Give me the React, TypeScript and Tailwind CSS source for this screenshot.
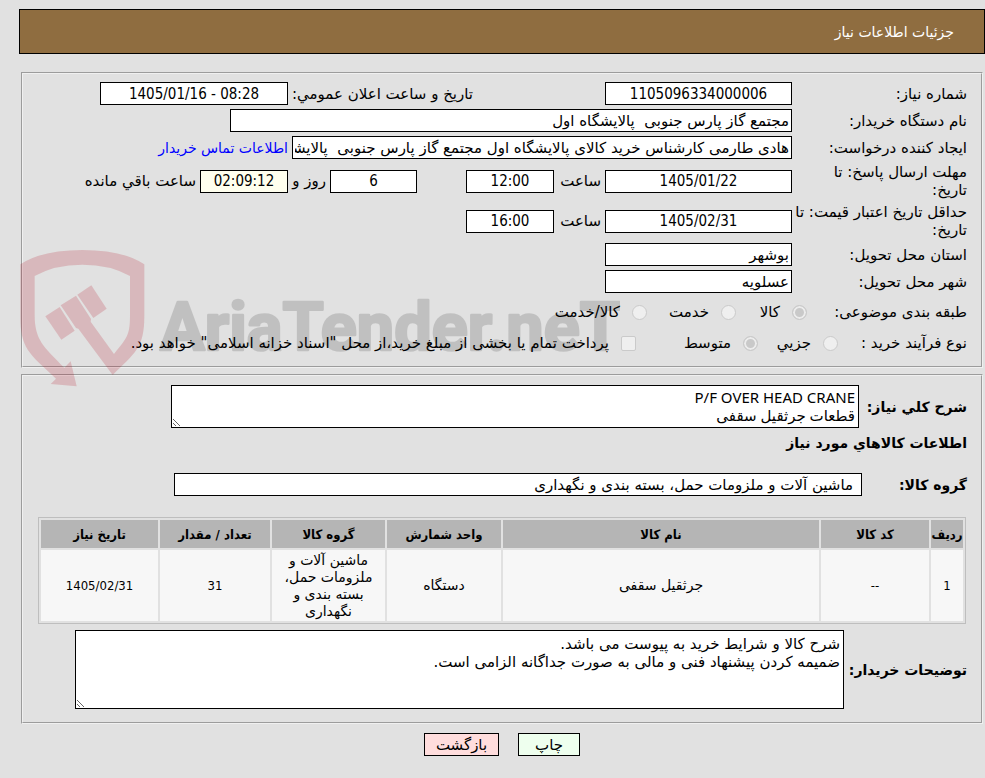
import type { ReactNode } from 'react';

const items = [
  {
    row: '1',
    code: '--',
    name: 'جرثقیل سقفی',
    unit: 'دستگاه',
    group: 'ماشین آلات و ملزومات حمل، بسته بندی و نگهداری',
    amount: '31',
    date: '1405/02/31',
  },
];

const columns = [
  { title: 'ردیف', width: 'w-[32px]' },
  { title: 'کد کالا', width: 'w-[108px]' },
  { title: 'نام کالا', width: '' },
  { title: 'واحد شمارش', width: 'w-[114px]' },
  { title: 'گروه کالا', width: 'w-[113px]' },
  { title: 'تعداد / مقدار', width: 'w-[110px]' },
  { title: 'تاریخ نیاز', width: 'w-[117px]' },
];

const box = 'h-[23px] shrink-0 border border-black px-0.5';
const textBox = `${box} bg-white`;
const numberBox = `${box} bg-white text-center font-['DejaVu_Sans_Condensed',sans-serif]`;
const timerBox = `${box} bg-[#ffffee] text-center font-['DejaVu_Sans_Condensed',sans-serif]`;
const numberCell = "font-['DejaVu_Sans_Condensed',sans-serif] text-[13px]";
const optionBox =
  'size-[15px] shrink-0 appearance-none border border-[#cacaca] bg-[#efefef]';
const radioBox = `${optionBox} rounded-full checked:bg-[#c9c9c9] checked:shadow-[inset_0_0_0_2px_#ececec]`;

function Row({ id, label, children }: { id: string; label: string; children: ReactNode }) {
  return (
    <div className="flex items-center">
      <label htmlFor={id} className="w-[175px] shrink-0 whitespace-pre">
        {label}
      </label>
      {children}
    </div>
  );
}

function Watermark() {
  return (
    <svg
      aria-hidden="true"
      viewBox="60 178 1800 420"
      className="pointer-events-none absolute top-[249px] left-5 h-[140px] w-[600px]"
    >
      <g fill="#b40014" fillOpacity="0.18">
        <path d="M61 224 Q125 181 247 181 Q370 181 433 224 V380 C433 475 405 490 338 556 L235 417 L228 415 L182 347 L228 318 L273 388 L272 396 L342 493 C385 440 390 435 390 370 V259 Q330 225 247 225 Q164 225 104 259 V375 C104 450 130 470 193 534 L212 515 L230 590 L152 583 L168 567 C85 490 61 475 61 380 Z" />
        <path d="M136 380 L179 352 L224 423 L184 450 Z" />
        <path d="M232 315 L274 287 L320 357 L280 385 Z" />
      </g>
      <text
        x="480"
        y="482"
        direction="ltr"
        fill="#000"
        stroke="#000"
        strokeWidth="8"
        strokeLinejoin="round"
        opacity="0.14"
        fontSize="200"
        fontWeight="700"
        fontFamily="Roboto, sans-serif"
      >
        AriaTender.neT
      </text>
    </svg>
  );
}

export default function App() {
  return (
    <div
      dir="rtl"
      className="relative min-h-screen bg-[#e1e1e1] pt-[9px] pb-[22px] font-['DejaVu_Sans',sans-serif] text-[15px] leading-[18px] text-black"
    >
      <header className="ml-[19px] flex h-[45px] items-center border border-black bg-[#8f6d40] pr-[30px] text-sm text-white">
        <h1>جزئیات اطلاعات نیاز</h1>
      </header>

      <main className="mt-[18px] mr-0.5 ml-[21px]">
        <fieldset className="flex flex-col gap-1 border-2 border-[#f0f0f0] px-3.5 pt-2 pb-[11px] [border-style:groove]">
          <Row id="number" label="شماره نیاز:">
            <input id="number" readOnly defaultValue="1105096334000006" className={`${numberBox} w-[187px]`} />
            <label htmlFor="announced" className="w-[317px] shrink-0 pl-1 text-left whitespace-nowrap">
              تاریخ و ساعت اعلان عمومي:
            </label>
            <input
              id="announced"
              dir="ltr"
              readOnly
              defaultValue="1405/01/16 - 08:28"
              className={`${numberBox} w-[188px]`}
            />
          </Row>
          <Row id="buyer" label="نام دستگاه خریدار:">
            <input
              id="buyer"
              readOnly
              defaultValue="مجتمع گاز پارس جنوبی  پالایشگاه اول"
              className={`${textBox} w-[562px]`}
            />
          </Row>
          <Row id="creator" label="ایجاد کننده درخواست:">
            <input
              id="creator"
              readOnly
              defaultValue="هادی طارمی کارشناس خرید کالای پالایشگاه اول مجتمع گاز پارس جنوبی  پالایشگاه اول"
              className={`${textBox} w-[500px]`}
            />
            <a href="#contact" className="mr-1 text-sm whitespace-nowrap text-[#0000ff]">
              اطلاعات تماس خریدار
            </a>
          </Row>
          <Row id="deadline" label={'مهلت ارسال پاسخ: تا\nتاریخ:'}>
            <input id="deadline" readOnly defaultValue="1405/01/22" className={`${numberBox} w-[187px]`} />
            <label htmlFor="deadline-hour" className="w-[51px] shrink-0 pr-1">
              ساعت
            </label>
            <input id="deadline-hour" readOnly defaultValue="12:00" className={`${numberBox} w-[88px]`} />
            <input id="days" readOnly defaultValue="6" className={`${numberBox} mr-[49px] w-[87px]`} />
            <label htmlFor="days" className="w-[42px] shrink-0 pr-1 whitespace-nowrap">
              روز و
            </label>
            <input id="remaining" readOnly defaultValue="02:09:12" className={`${timerBox} w-[88px]`} />
            <label htmlFor="remaining" className="mr-1 whitespace-nowrap">
              ساعت باقي مانده
            </label>
          </Row>
          <Row id="validity" label={'حداقل تاریخ اعتبار قیمت: تا\nتاریخ:'}>
            <input id="validity" readOnly defaultValue="1405/02/31" className={`${numberBox} w-[187px]`} />
            <label htmlFor="validity-hour" className="w-[51px] shrink-0 pr-1">
              ساعت
            </label>
            <input id="validity-hour" readOnly defaultValue="16:00" className={`${numberBox} w-[88px]`} />
          </Row>
          <Row id="province" label="استان محل تحویل:">
            <input id="province" readOnly defaultValue="بوشهر" className={`${textBox} w-[187px]`} />
          </Row>
          <Row id="city" label="شهر محل تحویل:">
            <input id="city" readOnly defaultValue="عسلویه" className={`${textBox} w-[187px]`} />
          </Row>

          <div role="radiogroup" aria-labelledby="category" className="flex h-[30px] items-center">
            <span id="category" className="w-40 shrink-0">
              طبقه بندی موضوعی:
            </span>
            <label className="flex w-[71px] items-center gap-3">
              <input type="radio" name="category" disabled defaultChecked className={radioBox} />
              کالا
            </label>
            <label className="flex w-[89px] items-center gap-3">
              <input type="radio" name="category" disabled className={radioBox} />
              خدمت
            </label>
            <label className="flex items-center gap-3">
              <input type="radio" name="category" disabled className={radioBox} />
              کالا/خدمت
            </label>
          </div>

          <div role="radiogroup" aria-labelledby="process" className="flex h-6 items-center">
            <span id="process" className="w-[129px] shrink-0">
              نوع فرآیند خرید :
            </span>
            <label className="flex w-20 items-center gap-3">
              <input type="radio" name="process" disabled className={radioBox} />
              جزیي
            </label>
            <label className="flex w-[122px] items-center gap-3">
              <input type="radio" name="process" disabled defaultChecked className={radioBox} />
              متوسط
            </label>
            <label className="flex items-center gap-3 whitespace-nowrap">
              <input type="checkbox" disabled className={`${optionBox} rounded-xs`} />
              پرداخت تمام یا بخشی از مبلغ خرید،از محل "اسناد خزانه اسلامی" خواهد بود.
            </label>
          </div>
        </fieldset>

        <fieldset className="mt-1.5 border-2 border-[#f0f0f0] px-3.5 pt-[9px] pb-[13px] [border-style:groove]">
          <div className="flex items-center">
            <label htmlFor="summary" className="w-[108px] shrink-0 text-sm font-bold whitespace-nowrap">
              شرح کلي نیاز:
            </label>
            <textarea
              id="summary"
              readOnly
              defaultValue={'P/F OVER HEAD CRANE\nقطعات جرثقیل سقفی'}
              className="h-[43px] w-[688px] border border-black bg-white px-[3px] py-0.5 font-['Noto_Sans','DejaVu_Sans',sans-serif]"
            />
          </div>
          <h2 className="mt-1.5 text-sm leading-[18px] font-bold">اطلاعات کالاهاي مورد نیاز</h2>
          <div className="mt-[21px] flex items-center">
            <label htmlFor="group" className="w-[105px] shrink-0 text-sm font-bold">
              گروه کالا:
            </label>
            <input
              id="group"
              readOnly
              defaultValue="ماشین آلات و ملزومات حمل، بسته بندی و نگهداری"
              className="h-[23px] w-[688px] border border-black bg-white px-2"
            />
          </div>

          <table className="mx-px mt-[21px] w-[calc(100%-2px)] table-fixed border-separate border-spacing-0.5 border border-[#bebebe] text-center text-sm leading-[17px]">
            <thead className="font-['DejaVu_Sans_Condensed',sans-serif] text-[13px]">
              <tr className="h-7 bg-[#b5b5b5]">
                {columns.map((column) => (
                  <th key={column.title} scope="col" className={`${column.width} whitespace-nowrap`}>
                    {column.title}
                  </th>
                ))}
              </tr>
            </thead>
            <tbody>
              {items.map((item) => (
                <tr key={item.row} className="h-[71px] bg-[#f7f7f7]">
                  <td className={numberCell}>{item.row}</td>
                  <td className={numberCell}>{item.code}</td>
                  <td>{item.name}</td>
                  <td>{item.unit}</td>
                  <td className="px-3">{item.group}</td>
                  <td className={numberCell}>{item.amount}</td>
                  <td className={numberCell}>{item.date}</td>
                </tr>
              ))}
            </tbody>
          </table>

          <div className="mt-1.5 flex items-center">
            <label htmlFor="notes" className="w-[123px] shrink-0 text-sm font-bold whitespace-nowrap">
              توضیحات خریدار:
            </label>
            <textarea
              id="notes"
              readOnly
              defaultValue={'شرح کالا و شرایط خرید به پیوست می باشد.\nضمیمه کردن پیشنهاد فنی و مالی به صورت جداگانه الزامی است.'}
              className="h-[79px] w-[769px] border border-black bg-white px-[3px] py-1"
            />
          </div>
        </fieldset>

        <div className="mt-[9px] flex justify-center gap-[19px]">
          <button type="button" className="h-[23px] w-[62px] border border-black bg-[#eeffee]">
            چاپ
          </button>
          <button type="button" className="h-[23px] w-[75px] border border-black bg-[#ffdddd]">
            بازگشت
          </button>
        </div>
      </main>

      <Watermark />
    </div>
  );
}
